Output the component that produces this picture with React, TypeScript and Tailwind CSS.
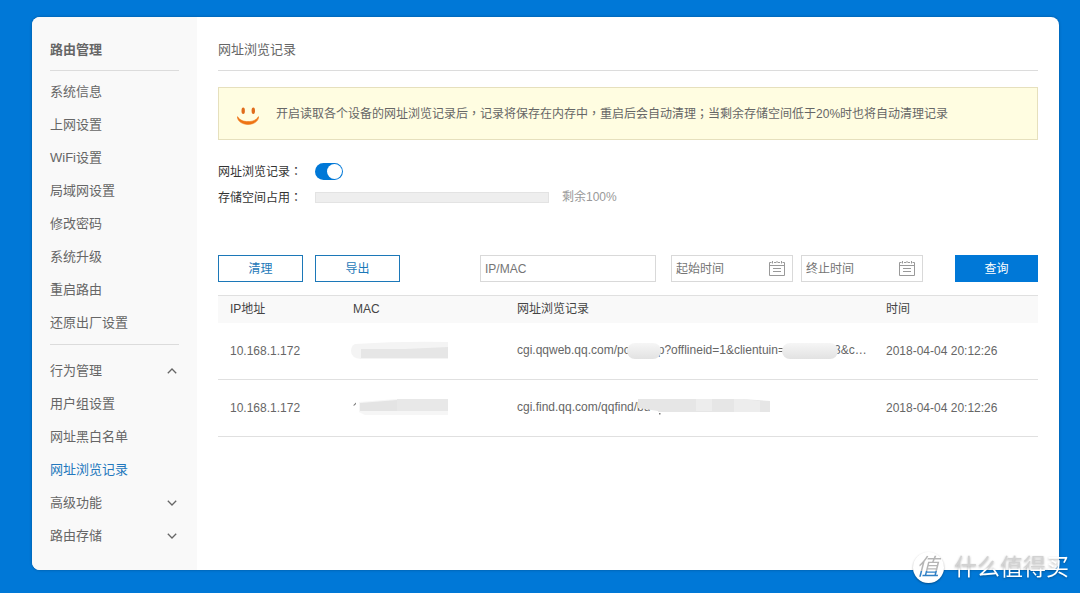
import { useState } from 'react';

const ROUTER_LINKS = ['系统信息', '上网设置', 'WiFi设置', '局域网设置', '修改密码', '系统升级', '重启路由', '还原出厂设置'];
const BEHAVIOR_LINKS = ['用户组设置', '网址黑白名单', '网址浏览记录'];
const ACTIVE_LINK = '网址浏览记录';

// Full-width punctuation centred in its cell.
function Mark({ children }: { children: string }) {
  return <span className="font-['Noto_Sans_CJK_TC',sans-serif]">{children}</span>;
}

function Chevron({ up = false }: { up?: boolean }) {
  return (
    <svg viewBox="0 0 10 6" className="mr-[2px] h-[6px] w-[10px]" fill="none" stroke="#666" strokeWidth="1.3" aria-hidden="true">
      <path d={up ? 'M0.8 5.2 L5 1 L9.2 5.2' : 'M0.8 0.8 L5 5 L9.2 0.8'} />
    </svg>
  );
}

function NavLink({ label }: { label: string }) {
  const color = label === ACTIVE_LINK ? 'text-[#2478bd]' : 'text-[#666]';
  return (
    <li>
      <a href="#" className={`flex h-[33px] items-center ${color}`}>
        {label}
      </a>
    </li>
  );
}

function NavGroup({ label, links, initiallyOpen = false }: { label: string; links: string[]; initiallyOpen?: boolean }) {
  const [open, setOpen] = useState(initiallyOpen);
  return (
    <li>
      <button type="button" aria-expanded={open} onClick={() => setOpen(!open)} className="flex h-[33px] w-full items-center justify-between">
        <span>{label}</span>
        <Chevron up={open} />
      </button>
      {open && links.length > 0 && (
        <ul>
          {links.map((link) => (
            <NavLink key={link} label={link} />
          ))}
        </ul>
      )}
    </li>
  );
}

function Sidebar() {
  return (
    <nav className="w-[165px] shrink-0 rounded-l-lg bg-[#f9f9f9] pr-[18px] pb-[18px] pl-[18px] text-[13px] text-[#666]">
      <h2 className="mt-3 flex h-[42px] items-center border-b border-[#dcdcdc] font-bold">路由管理</h2>
      <ul className="mt-1 border-b border-[#dcdcdc] pb-[5px]">
        {ROUTER_LINKS.map((link) => (
          <NavLink key={link} label={link} />
        ))}
      </ul>
      <ul className="mt-[9px]">
        <NavGroup label="行为管理" links={BEHAVIOR_LINKS} initiallyOpen />
        <NavGroup label="高级功能" links={[]} />
        <NavGroup label="路由存储" links={[]} />
      </ul>
    </nav>
  );
}

function Smile() {
  return (
    <svg viewBox="0 0 22 19" className="mt-1 h-[19px] w-[22px] shrink-0" aria-hidden="true">
      <ellipse cx="6.2" cy="4.8" rx="1.7" ry="3.3" fill="#e06c1c" />
      <ellipse cx="16.3" cy="4.8" rx="1.7" ry="3.3" fill="#e06c1c" />
      <path d="M0.4 10.6 C3 14.6 7 15.6 11 15.6 C15 15.6 19 14.6 21.6 10.6 C21.6 15.4 16.6 18.4 11 18.4 C5.4 18.4 0.4 15.4 0.4 10.6 Z" fill="#ee7414" stroke="#ee7414" strokeWidth="0.6" />
    </svg>
  );
}

function CalendarIcon() {
  return (
    <svg viewBox="0 0 16 15" className="h-[15px] w-4 shrink-0" fill="none" stroke="#999" aria-hidden="true">
      <path d="M2.5 1.5 H0.5 V14.5 H15.5 V1.5 H13.5 M5 1.5 H7 M9 1.5 H11 M0.5 4.5 H15.5 M4 7.5 H12 M4 10.5 H12" />
      <path d="M3.5 0 V2.5 M8 0 V2 M12.5 0 V2.5" />
    </svg>
  );
}

function DateField({ label }: { label: string }) {
  return (
    <div className="flex h-[27px] w-[122px] items-center border border-[#d9d9d9] pr-[7px] pl-1">
      <input type="text" aria-label={label} placeholder={label} className="min-w-0 flex-1 outline-none placeholder:text-[#757575]" />
      <CalendarIcon />
    </div>
  );
}

function MacMask({ short = false }: { short?: boolean }) {
  return (
    <svg viewBox="0 0 100 20" className="-ml-[2px] h-5 w-[100px]" aria-hidden="true">
      {short ? (
        <>
          <path d="M2 7.5 L5 4.5 L5 6 L3.5 7.5 Z" fill="#777" />
          <path d="M8 4 L45 1 H97 V17 H14 L8 14 Z" fill="#f6f6f6" />
          <path d="M9 5 L46 2 V13 H9 Z" fill="#e4e4e4" />
          <path d="M46 1 H97 V13 H46 Z" fill="#e8e8e8" />
        </>
      ) : (
        <>
          <path d="M4 3 Q50 0 97 1 V18 H10 Q0 17 0 10 Q0 5 4 3 Z" fill="#f4f4f4" />
          <path d="M10 8 H54 L97 6 V17 H10 Z" fill="#e6e6e6" />
        </>
      )}
    </svg>
  );
}

function Blob({ wide = false }: { wide?: boolean }) {
  return (
    <span
      className={`relative z-10 inline-block h-4 rounded-full bg-gradient-to-b from-[#f6f6f6] to-[#e2e2e2] align-middle ${
        wide ? '-mr-1 -ml-[3px] w-[56px]' : '-mx-[3px] w-[34px]'
      }`}
    />
  );
}

function UrlTail() {
  return (
    <svg viewBox="0 0 132 18" className="relative z-10 -ml-3 inline-block h-[18px] w-[132px] align-middle" aria-hidden="true">
      <path d="M0 0 H104 L132 2 V13 H20 V12 L0 9 Z" fill="#e6e6e6" />
      <path d="M58 0 H74 V12 H58 Z M96 0 L104 0 L122 2 V13 H96 Z" fill="#ededed" />
      <path d="M21 14 H22.5 V15.5 H21 Z" fill="#777" />
    </svg>
  );
}

function RecordsTable() {
  return (
    <table className="mt-[13px] w-full table-fixed border-collapse text-left">
      <colgroup>
        <col className="w-[15%]" />
        <col className="w-[20%]" />
        <col className="w-[45%]" />
        <col className="w-[20%]" />
      </colgroup>
      <thead className="border-t border-[#e0e0e0] bg-[#f9f9f9] text-[#444]">
        <tr className="h-[27px]">
          <th className="pl-3 font-normal">IP地址</th>
          <th className="pl-3 font-normal">MAC</th>
          <th className="pl-3 font-normal">网址浏览记录</th>
          <th className="pl-3 font-normal">时间</th>
        </tr>
      </thead>
      <tbody className="text-[#666]">
        <tr className="h-[57px] border-b border-[#e0e0e0]">
          <td className="pl-3">10.168.1.172</td>
          <td className="pl-3">
            <MacMask />
          </td>
          <td className="overflow-hidden pl-3 whitespace-nowrap">
            cgi.qqweb.qq.com/pc
            <Blob />
            p?offlineid=1&amp;clientuin=
            <Blob wide />
            3&amp;c…
          </td>
          <td className="pl-3 whitespace-nowrap">2018-04-04 20:12:26</td>
        </tr>
        <tr className="h-[57px] border-b border-[#e0e0e0]">
          <td className="pl-3">10.168.1.172</td>
          <td className="pl-3">
            <MacMask short />
          </td>
          <td className="overflow-hidden pl-3 whitespace-nowrap">
            cgi.find.qq.com/qqfind/bu
            <UrlTail />
          </td>
          <td className="pl-3 whitespace-nowrap">2018-04-04 20:12:26</td>
        </tr>
      </tbody>
    </table>
  );
}

function Watermark() {
  return (
    <div className="absolute right-[11px] bottom-[10px] flex items-center gap-[10px]">
      <span className="flex size-[31px] items-center justify-center rounded-full bg-white shadow-[0_1px_2px_rgba(0,0,0,0.35)]">
        <span className="bg-gradient-to-b from-[#b5b5b5] from-60% to-[#2f7fc4] to-60% bg-clip-text pr-[2px] text-[23px] leading-[31px] text-transparent italic">值</span>
      </span>
      <span className="text-[23px] leading-[31px] drop-shadow-[0_1px_1px_rgba(0,0,0,0.3)]">
        <span className="bg-gradient-to-b from-[#d2d2d2] from-50% to-white to-60% bg-clip-text text-transparent">什么值得</span>
        <span className="text-white">买</span>
      </span>
    </div>
  );
}

export default function App() {
  const [recording, setRecording] = useState(true);
  return (
    <div className="relative min-h-screen bg-[#0078d7] pt-[17px] pr-[21px] pb-[23px] pl-8 font-['Liberation_Sans','Noto_Sans_CJK_SC',sans-serif] text-xs text-[#666]">
      <div className="flex rounded-lg bg-white shadow-[0_0_3px_rgba(0,0,0,0.3)]">
        <Sidebar />
        <main className="min-w-0 flex-1 pr-[21px] pl-[21px]">
          <h1 className="mt-3 flex h-[42px] items-center border-b border-[#dcdcdc] text-[13px]">网址浏览记录</h1>

          <div className="mt-4 flex h-[53px] items-center gap-[17px] border border-[#e6e0bd] bg-[#fffde1] pl-[18px]">
            <Smile />
            <p>
              开启读取各个设备的网址浏览记录后<Mark>，</Mark>记录将保存在内存中<Mark>，</Mark>重启后会自动清理<Mark>；</Mark>
              当剩余存储空间低于20%时也将自动清理记录
            </p>
          </div>

          <div className="mt-[18px] flex h-[26px] items-center text-[#333]">
            <label htmlFor="recording" className="w-[97px]">
              网址浏览记录<Mark>：</Mark>
            </label>
            <input
              id="recording"
              type="checkbox"
              role="switch"
              checked={recording}
              onChange={(event) => setRecording(event.target.checked)}
              className="flex h-[17px] w-7 appearance-none items-center rounded-full bg-[#bbb] px-px before:size-[15px] before:rounded-full before:bg-white checked:justify-end checked:bg-[#0078d7]"
            />
          </div>
          <div className="flex h-[26px] items-center text-[#333]">
            <span id="storage" className="w-[97px]">
              存储空间占用<Mark>：</Mark>
            </span>
            <div role="progressbar" aria-labelledby="storage" aria-valuenow={0} className="h-[11px] w-[234px] border border-[#e3e3e3] bg-[#eee]" />
            <span className="ml-[13px] text-[#999]">剩余100%</span>
          </div>

          <div className="mt-[45px] flex items-center">
            <button type="button" className="h-[27px] w-[85px] border border-[#1c78b8] text-[#1c78b8]">
              清理
            </button>
            <button type="button" className="ml-3 h-[27px] w-[85px] border border-[#1c78b8] text-[#1c78b8]">
              导出
            </button>
            <input
              type="text"
              aria-label="IP/MAC"
              placeholder="IP/MAC"
              className="ml-auto h-[27px] w-[176px] border border-[#d9d9d9] px-1 outline-none placeholder:text-[#757575]"
            />
            <div className="ml-[15px] flex gap-2">
              <DateField label="起始时间" />
              <DateField label="终止时间" />
            </div>
            <button type="button" className="ml-8 h-[27px] w-[83px] bg-[#0078d7] text-white">
              查询
            </button>
          </div>

          <RecordsTable />
        </main>
      </div>
      <Watermark />
    </div>
  );
}
